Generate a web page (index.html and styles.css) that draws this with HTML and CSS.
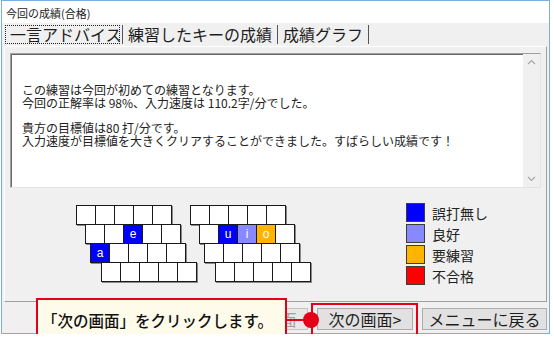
FILE: index.html
```html
<!DOCTYPE html>
<html lang="ja">
<head>
  <meta charset="UTF-8" />
  <title>今回の成績(合格)</title>
  <link rel="stylesheet" href="styles.css">
</head>
<body>
  <div class="window">
    <div class="titlebar">今回の成績(合格)</div>

    <!-- tab strip -->
    <div class="tabs">
      <div class="tab tab-active"><span class="focus">一言アドバイス</span></div>
      <div class="tab">練習したキーの成績</div>
      <div class="tab">成績グラフ</div>
    </div>

    <div class="page">
      <div class="memo">
        <div class="memo-text">
          <p>この練習は今回が初めての練習となります。<br>今回の正解率は 98%、入力速度は 110.2字/分でした。</p>
          <p>貴方の目標値は80 打/分です。<br>入力速度が目標値を大きくクリアすることができました。すばらしい成績です！</p>
        </div>
        <div class="scrollbar">
          <svg width="17" height="17" viewBox="0 0 17 17"><polyline points="5,10 8.5,6.5 12,10" fill="none" stroke="#a6a6a6" stroke-width="1.2"/></svg>
          <svg width="17" height="17" viewBox="0 0 17 17"><polyline points="5,7 8.5,10.5 12,7" fill="none" stroke="#a6a6a6" stroke-width="1.2"/></svg>
        </div>
      </div>

      <div class="result">
        <div class="keyboard">
          <div class="kb-row">
            <div class="half"><span class="key"></span><span class="key"></span><span class="key"></span><span class="key"></span><span class="key"></span></div>
            <div class="half"><span class="key"></span><span class="key"></span><span class="key"></span><span class="key"></span><span class="key"></span></div>
          </div>
          <div class="kb-row row2">
            <div class="half"><span class="key"></span><span class="key"></span><span class="key good">e</span><span class="key"></span><span class="key"></span></div>
            <div class="half"><span class="key"></span><span class="key good">u</span><span class="key fine">i</span><span class="key weak">o</span><span class="key"></span></div>
          </div>
          <div class="kb-row row3">
            <div class="half"><span class="key good">a</span><span class="key"></span><span class="key"></span><span class="key"></span><span class="key"></span></div>
            <div class="half"><span class="key"></span><span class="key"></span><span class="key"></span><span class="key"></span><span class="key"></span></div>
          </div>
          <div class="kb-row row4">
            <div class="half"><span class="key"></span><span class="key"></span><span class="key"></span><span class="key"></span><span class="key"></span></div>
            <div class="half"><span class="key"></span><span class="key"></span><span class="key"></span><span class="key"></span><span class="key"></span></div>
          </div>
        </div>

        <ul class="legend">
          <li><span class="swatch good"></span>誤打無し</li>
          <li><span class="swatch fine"></span>良好</li>
          <li><span class="swatch weak"></span>要練習</li>
          <li><span class="swatch fail"></span>不合格</li>
        </ul>
      </div>
    </div>

    <div class="buttons">
      <button class="btn btn-prev" disabled>&lt;前の画面</button>
      <button class="btn btn-next">次の画面&gt;</button>
      <button class="btn btn-menu">メニューに戻る</button>
    </div>

    <!-- annotation -->
    <div class="callout">「次の画面」をクリックします。</div>
    <div class="callout-line"></div>
    <div class="callout-dot"></div>
    <div class="highlight"></div>
  </div>
</body>
</html>
```

FILE: styles.css
```css
body {
  margin: 0;
  background: #ffffff;
  font-family: "Noto Sans CJK JP", "Noto Sans", sans-serif;
  color: #1e1e1e;
}

.window {
  position: relative;
  box-sizing: border-box;
  margin-left: 1px;
  width: 549px;
  height: 334px;
  border: 1px solid #7aaee0;
  background: #f0f0f0;
}

.titlebar {
  height: 22px;
  line-height: 24px;
  padding-left: 4px;
  background: #ffffff;
  font-size: 11px;
  color: #222;
  overflow: hidden;
}

.tabs {
  display: flex;
  align-items: center;
  height: 23px;
  padding-left: 3px;
  font-size: 16px;
}

.tab {
  height: 19px;
  line-height: 19px;
  padding: 0 5px;
  border-right: 1px solid #555;
  white-space: nowrap;
}

.tab-active {
  padding: 0 2px 0 0;
}

.focus {
  display: block;
  box-sizing: border-box;
  width: 115px;
  height: 19px;
  line-height: 17px;
  padding-left: 4px;
  border: 1px dotted #222;
}

.page {
  box-sizing: border-box;
  margin-left: 2px;
  width: 543px;
  height: 256px;
  border: 1px solid;
  border-color: #ffffff #a0a0a0 #a0a0a0 #ffffff;
}

.memo {
  display: flex;
  box-sizing: border-box;
  margin: 6px 0 0 5px;
  width: 531px;
  height: 135px;
  background: #ffffff;
  border: 1px solid;
  border-color: #a0a0a0 #e3e3e3 #e3e3e3 #a0a0a0;
  box-shadow: inset 1px 1px 0 #696969;
}

.memo-text {
  flex: 1;
  padding: 29px 0 0 11px;
  font-size: 12px;
  line-height: 13px;
  color: #222;
}

.memo-text p {
  margin: 0;
}

.memo-text p + p {
  margin-top: 12px;
}

.scrollbar {
  display: flex;
  flex-direction: column;
  justify-content: space-between;
  width: 17px;
  background: #f0f0f0;
}

.scrollbar svg {
  display: block;
}

.result {
  display: flex;
  margin-top: 17px;
  padding-left: 71px;
}

.keyboard {
  width: 240px;
}

.kb-row {
  display: flex;
  margin-bottom: -1px;
}

.row2 { padding-left: 9px; }
.row3 { padding-left: 14px; }
.row4 { padding-left: 25px; }

.half {
  display: flex;
}

.half + .half {
  margin-left: 19px;
}

.key {
  box-sizing: border-box;
  width: 20px;
  height: 20px;
  margin-right: -1px;
  border: 1px solid #1a1a1a;
  background: #ffffff;
  box-shadow: 1px 1px 0 #8a8a8a;
  font-family: "Liberation Sans", sans-serif;
  font-size: 12px;
  line-height: 18px;
  text-align: center;
  color: #ffffff;
}

.good { background: #0000ff; }
.fine { background: #8888ff; }
.weak { background: #ffb400; }
.fail { background: #ff0000; }

.legend {
  list-style: none;
  margin: -3px 0 0 90px;
  padding: 0;
  font-size: 14px;
  color: #222;
}

.legend li {
  display: flex;
  align-items: center;
  gap: 7px;
  height: 21px;
}

.swatch {
  box-sizing: border-box;
  width: 19px;
  height: 19px;
  border: 1px solid #3c3c3c;
}

.buttons {
  display: flex;
  justify-content: flex-end;
  gap: 9px;
  padding: 6px 2px 0 0;
}

.btn {
  box-sizing: border-box;
  height: 22px;
  padding: 0;
  border: 1px solid #adadad;
  background: #e1e1e1;
  font-family: "Noto Sans CJK JP", sans-serif;
  font-size: 16px;
  line-height: 20px;
  color: #1e1e1e;
}

.btn-prev {
  width: 96px;
  color: #a0a0a0;
  border-color: #c4c4c4;
  background: #e8e8e8;
}

.btn-next { width: 96px; }
.btn-menu { width: 125px; }

.callout {
  position: absolute;
  left: 34px;
  top: 297px;
  box-sizing: border-box;
  width: 251px;
  height: 44px;
  display: flex;
  align-items: center;
  padding-left: 4px;
  border: 2px solid #e50019;
  background: #fffbea;
  font-size: 15.5px;
  font-weight: 500;
  color: #111;
  white-space: nowrap;
}

.callout-line {
  position: absolute;
  left: 284px;
  top: 318px;
  width: 20px;
  height: 2px;
  background: #e50019;
}

.callout-dot {
  position: absolute;
  left: 301px;
  top: 311px;
  width: 16px;
  height: 16px;
  border-radius: 50%;
  background: #e50019;
}

.highlight {
  position: absolute;
  left: 309px;
  top: 302px;
  box-sizing: border-box;
  width: 107px;
  height: 33px;
  border: 2px solid #e50019;
}
```
